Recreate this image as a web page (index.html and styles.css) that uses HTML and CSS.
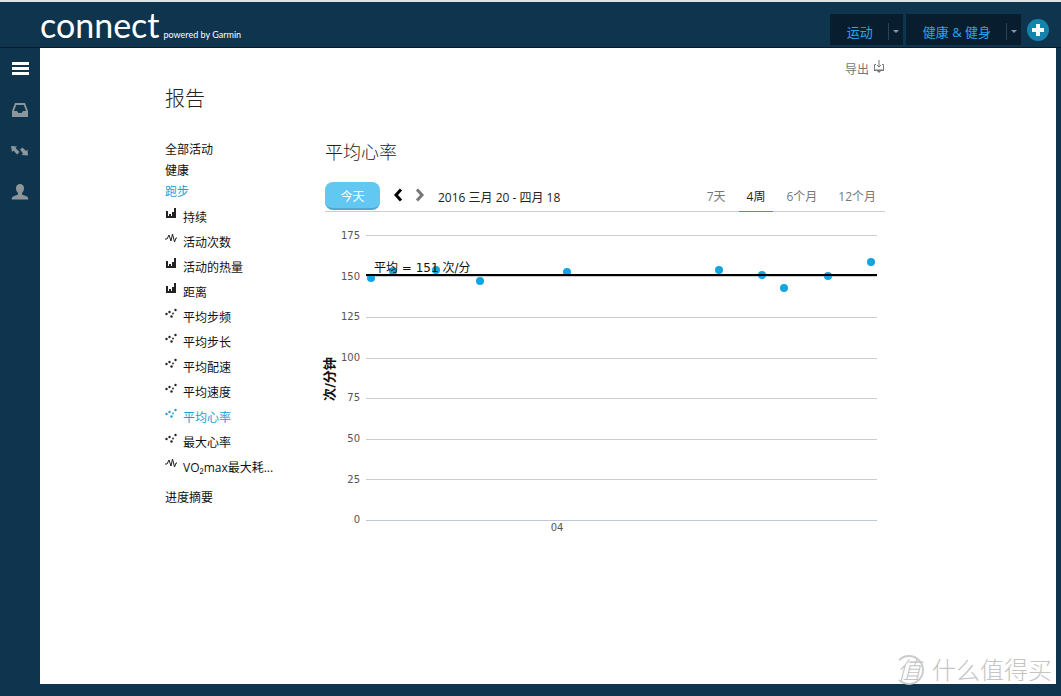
FILE: index.html
```html
<!DOCTYPE html>
<html lang="zh-CN">
<head>
<meta charset="utf-8">
<meta name="viewport" content="width=device-width, initial-scale=1">
<title>报告 - connect</title>
<link rel="stylesheet" href="styles.css">
</head>
<body>
<svg class="defs" aria-hidden="true">
  <symbol id="bars" viewBox="0 0 12 12"><path d="M1 3h2v6H1zM4 6h2v3H4zM7 4h2v5H7zM9 0h2v9H9zM1 8h10v2H1z" fill="currentColor"/></symbol>
  <symbol id="pulse" viewBox="0 0 12 12"><path d="M0 6h2l2-4 2 6 1.500-7 2 8 1.500-4H12" fill="none" stroke="currentColor" stroke-width="1"/></symbol>
  <symbol id="dots" viewBox="0 0 12 12"><g fill="currentColor"><circle cx="1.500" cy="6" r="1.200"/><circle cx="4.500" cy="4" r="1.200"/><circle cx="6.500" cy="8.500" r="1.200"/><circle cx="8" cy="5.500" r=".9"/><circle cx="10.500" cy="2" r="1.200"/></g></symbol>
</svg>
<div class="app">
  <header class="header">
    <a class="brand" href="#"><span class="brand-name">connect</span><span class="brand-sub">powered by Garmin</span></a>
    <nav class="tabs">
      <div class="tab"><a class="tab-link" href="#">运动</a><button class="tab-more" aria-label="运动菜单"></button></div>
      <div class="tab"><a class="tab-link" href="#">健康 &amp; 健身</a><button class="tab-more" aria-label="健康菜单"></button></div>
    </nav>
    <button class="add" aria-label="添加"><svg width="12" height="12" viewBox="0 0 12 12"><path d="M4 0h4v4h4v4H8v4H4V8H0V4h4z" fill="#fff"/></svg></button>
  </header>
  <nav class="rail">
    <button class="rail-btn rail-menu" aria-label="菜单"><svg width="18" height="14" viewBox="0 0 18 14"><path d="M1 0h17v3H1zM1 5h17v3H1zM1 10h17v3H1z" fill="currentColor"/></svg></button>
    <a class="rail-btn" href="#" aria-label="收件箱"><svg width="18" height="16" viewBox="0 0 18 16"><path fill-rule="evenodd" d="M4 1h10l3 8v6H1V9zM5.200 3 3 9h3l1.500 2h3L12 9h3l-2.200-6z" fill="currentColor"/></svg></a>
    <a class="rail-btn" href="#" aria-label="连接"><svg width="18" height="12" viewBox="0 0 18 12"><path d="M0 1l6 .5-1.500 1.500L8.500 7 6 9.500 2.500 5.500 1 7zM17 10.500l-6.500-.5L12 8.500 9 4.500l2.500-2L15 6l1.500-1.500z" fill="currentColor"/></svg></a>
    <a class="rail-btn" href="#" aria-label="个人资料"><svg width="18" height="18" viewBox="0 0 18 18"><path d="M9 1c2.500 0 4 1.700 4 4.200 0 2-.8 3.700-2 4.700v1.600l5 2c1 .5 1.300 1.500 1.300 3H.7c0-1.500.3-2.500 1.300-3l5-2V9.900C5.800 8.900 5 7.200 5 5.200 5 2.700 6.500 1 9 1z" fill="currentColor"/></svg></a>
  </nav>
  <main class="main">
    <div class="content">
      <div class="actions"><a class="export" href="#">导出<svg width="12" height="14" viewBox="0 0 12 14"><path d="M3 4.500H1.500v6h9v-6H9M6 0v7M4 5l2 2 2-2" fill="none" stroke="currentColor"/><path d="M1 9.500h10V11H8l-2 2-2-2H1z" fill="currentColor"/></svg></a></div>
      <h1 class="title">报告</h1>
      <div class="columns">
        <nav class="menu">
          <a class="group" href="#">全部活动</a>
          <a class="group" href="#">健康</a>
          <a class="group current" href="#">跑步</a>
          <a class="item" href="#"><svg class="icon"><use href="#bars"/></svg>持续</a>
          <a class="item" href="#"><svg class="icon"><use href="#pulse"/></svg>活动次数</a>
          <a class="item" href="#"><svg class="icon"><use href="#bars"/></svg>活动的热量</a>
          <a class="item" href="#"><svg class="icon"><use href="#bars"/></svg>距离</a>
          <a class="item" href="#"><svg class="icon"><use href="#dots"/></svg>平均步频</a>
          <a class="item" href="#"><svg class="icon"><use href="#dots"/></svg>平均步长</a>
          <a class="item" href="#"><svg class="icon"><use href="#dots"/></svg>平均配速</a>
          <a class="item" href="#"><svg class="icon"><use href="#dots"/></svg>平均速度</a>
          <a class="item current" href="#"><svg class="icon"><use href="#dots"/></svg>平均心率</a>
          <a class="item" href="#"><svg class="icon"><use href="#dots"/></svg>最大心率</a>
          <a class="item" href="#"><svg class="icon"><use href="#pulse"/></svg>VO₂max最大耗...</a>
          <a class="group summary" href="#">进度摘要</a>
        </nav>
        <section class="report">
          <h2 class="report-title">平均心率</h2>
          <div class="toolbar">
            <button class="today">今天</button>
            <button class="step" aria-label="上一页"><svg width="10" height="14" viewBox="0 0 10 14"><path d="M8 1.500 3 7l5 5.500" fill="none" stroke="#000" stroke-width="3"/></svg></button>
            <button class="step" aria-label="下一页"><svg width="10" height="14" viewBox="0 0 10 14"><path d="M2 1.500 7 7l-5 5.500" fill="none" stroke="#777" stroke-width="3"/></svg></button>
            <span class="dates">2016 三月 20 - 四月 18</span>
            <div class="ranges">
              <button class="range">7天</button>
              <button class="range selected">4周</button>
              <button class="range">6个月</button>
              <button class="range">12个月</button>
            </div>
          </div>
          <svg class="chart" viewBox="0 0 560 328" role="img" aria-label="平均心率">
            <path d="M41 23.500h511M41 64.500h511M41 105.500h511M41 146.500h511M41 186.500h511M41 227.500h511M41 267.500h511" stroke="#ccc"/>
            <path d="M41 308.500h511" stroke="#c0c8d8"/>
            <g class="axis" text-anchor="end">
              <text x="35" y="27">175</text><text x="35" y="68">150</text><text x="35" y="108">125</text><text x="35" y="149">100</text>
              <text x="35" y="189">75</text><text x="35" y="230">50</text><text x="35" y="271">25</text><text x="35" y="311">0</text>
            </g>
            <text class="axis" x="232" y="319" text-anchor="middle">04</text>
            <text class="axis-title" transform="translate(9 167) rotate(-90)" text-anchor="middle">次/分钟</text>
            <g fill="#12a5e4">
              <circle cx="46" cy="66" r="4"/><circle cx="68" cy="59" r="4"/><circle cx="111" cy="58" r="4"/><circle cx="155" cy="69" r="4"/><circle cx="242" cy="60" r="4"/>
              <circle cx="394" cy="58" r="4"/><circle cx="437" cy="63" r="4"/><circle cx="459" cy="76" r="4"/><circle cx="503" cy="64" r="4"/><circle cx="546" cy="50" r="4"/>
            </g>
            <path d="M41 63h511" stroke="#000" stroke-width="2"/>
            <text class="average" x="49" y="60">平均 = 151 次/分</text>
          </svg>
        </section>
      </div>
    </div>
  </main>
</div>
<div class="watermark"><span class="mark">值</span><span>什么值得买</span></div>
</body>
</html>
```
FILE: styles.css
```css
* { box-sizing: border-box; }
body {
  margin: 0;
  background: #0f344d;
  color: #222;
  font: 12px/20px "Open Sans", "Noto Sans CJK SC", sans-serif;
}
a { color: inherit; text-decoration: none; }
button { border: 0; padding: 0; background: none; color: inherit; font: inherit; cursor: pointer; }
svg { display: block; flex: none; }
.defs { position: absolute; width: 0; height: 0; }
.app {
  display: grid;
  grid-template: 48px 1fr / 40px 1fr;
  min-height: 100vh;
  padding: 0 5px 12px 0;
}
.header {
  grid-column: 1 / -1;
  display: flex;
  align-items: center;
  margin-right: -5px;
  padding: 10px 12px 0 40px;
  border-top: 2px solid #dce6ea;
  border-bottom: 1px solid #081c2b;
}
.brand { display: flex; align-items: baseline; gap: 4px; margin-right: auto; color: #fff; font-family: Lato, sans-serif; line-height: 32px; }
.brand-name { font-family: Lato, sans-serif; font-size: 34px; }
.brand-sub { font-size: 9px; }
.tabs { display: flex; gap: 3px; }
.tab { display: flex; align-items: center; height: 31px; background: #081e2e; color: #2aa5ec; font-size: 13px; }
.tab-link { padding: 4px 15px 0 17px; }
.tab-more { display: flex; align-items: center; width: 15px; height: 17px; margin-top: 4px; padding-left: 4px; border-left: 1px solid #30414f; }
.tab-more::after { content: ""; border: 3px solid transparent; border-top-color: #8597a3; border-bottom: 0; }
.add { display: grid; place-items: center; width: 22px; height: 22px; margin-left: 6px; border-radius: 50%; background: #1583ad; }
.rail { display: flex; flex-direction: column; color: #8d969b; }
.rail-btn { display: grid; place-items: center; height: 41px; }
.rail-menu { color: #fff; }
.main { background: #fff; padding: 0 16px 0 125px; }
.content { max-width: 720px; }
.actions { display: flex; justify-content: flex-end; padding-top: 12px; }
.export { display: flex; gap: 4px; color: #777; }
.title { margin: 4px 0 25px; font-size: 20px; font-weight: 300; line-height: 30px; }
.columns { display: grid; grid-template-columns: 160px 1fr; }
.menu { display: flex; flex-direction: column; color: #111; }
.group { line-height: 21px; }
.item { display: flex; gap: 6px; line-height: 25px; }
.item:nth-of-type(4) { margin-top: 3px; }
.icon { width: 12px; height: 12px; margin-top: 3px; color: #222; }
.current, .current .icon { color: #1d9fd6; }
.summary { margin-top: 7px; }
.report-title { margin: 0 0 17px; font-size: 18px; font-weight: 300; line-height: 26px; }
.toolbar { display: flex; align-items: center; height: 30px; border-bottom: 1px solid #ccc; }
.today { width: 55px; height: 28px; margin-right: 13px; padding-top: 3px; border-radius: 8px; background: #62c7f1; border-bottom: 2px solid #4fa8d0; color: #fff; }
.step { width: 10px; margin-right: 12px; padding-top: 6px; }
.today, .step { align-self: flex-start; }
.dates { padding: 3px 0 0 1px; }
.ranges { display: flex; gap: 5px; margin: 0 1px 0 auto; align-self: stretch; color: #777; }
.range { height: 30px; padding: 1px 8px 0; border-bottom: 1px solid transparent; }
.selected { color: #222; border-bottom-color: #12a5e4; }
.chart { width: 100%; height: auto; overflow: visible; }
.axis { font: 10px "DejaVu Sans", sans-serif; fill: #555; }
.axis-title { font: bold 13px "DejaVu Sans", "Noto Sans CJK SC", sans-serif; fill: #111; }
.average { font: 12px "DejaVu Sans", "Noto Sans CJK SC", sans-serif; fill: #111; }
.watermark { position: absolute; right: 9px; bottom: 10px; display: flex; align-items: center; gap: 8px; color: #c4c4c4; font-size: 24px; line-height: 32px; font-weight: 300; }
.mark { display: grid; place-items: center; width: 30px; height: 30px; border: 2px solid #ccc; border-left-color: transparent; border-radius: 50%; font-size: 24px; font-style: italic; line-height: 26px; }
```
